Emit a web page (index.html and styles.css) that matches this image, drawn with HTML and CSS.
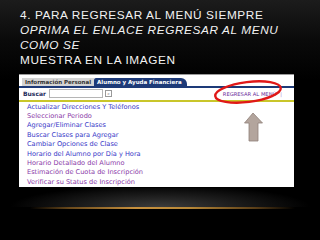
FILE: index.html
```html
<!DOCTYPE html>
<html>
<head>
<meta charset="utf-8">
<link rel="stylesheet" href="styles.css">
</head>
<body>
<div class="slide">
  <h1 class="title">
    <span class="line">4. PARA REGRESAR AL MENÚ SIEMPRE</span>
    <span class="line it">OPRIMA EL ENLACE REGRESAR AL MENU</span>
    <span class="line it">COMO SE</span>
    <span class="line">MUESTRA EN LA IMAGEN</span>
  </h1>
  <div class="shot">
    <div class="tabs">
      <span class="tab gray">Información Personal</span>
      <span class="tab blue">Alumno y Ayuda Financiera</span>
    </div>
    <div class="search">
      <span class="lbl">Buscar</span>
      <span class="inp"></span>
      <span class="go">»</span>
      <span class="back">REGRESAR AL MENÚ</span>
      <span class="cut">|</span>
    </div>
    <ul class="links">
      <li class="b">Actualizar Direcciones Y Teléfonos</li>
      <li class="p">Seleccionar Periodo</li>
      <li class="b">Agregar/Eliminar Clases</li>
      <li class="b">Buscar Clases para Agregar</li>
      <li class="b">Cambiar Opciones de Clase</li>
      <li class="b">Horario del Alumno por Día y Hora</li>
      <li class="p">Horario Detallado del Alumno</li>
      <li class="p">Estimación de Cuota de Inscripción</li>
      <li class="p">Verificar su Status de Inscripción</li>
    </ul>
    <svg class="marks" width="275" height="113" viewBox="0 0 275 113">
      <ellipse cx="229" cy="18" rx="33" ry="10" transform="rotate(-7 229 18)" fill="none" stroke="#e01818" stroke-width="2.4"/>
      <path d="M234 39 L243.5 49 L239 49 L239 67 L230 67 L230 49 L225.5 49 Z" fill="#b3a59d" stroke="#8f8079" stroke-width="0.8"/>
    </svg>
  </div>
  <div class="glow"></div>
  <div class="gold"></div>
</div>
</body>
</html>
```
FILE: styles.css
```css
html, body {
  margin: 0;
  padding: 0;
}
body {
  width: 320px;
  height: 240px;
  overflow: hidden;
  background: #000;
}
.slide {
  width: 320px;
  height: 240px;
  background: linear-gradient(#1c1c1c 0px, #0a0a0a 40px, #000 80px);
  display: flex;
  flex-direction: column;
}
.title {
  margin: 0;
  padding: 8px 0 0 20px;
  font-family: "Liberation Sans", Arial, sans-serif;
  font-weight: normal;
  font-size: 11.8px;
  line-height: 15px;
  color: #f2f2f2;
  letter-spacing: 0.6px;
  display: flex;
  flex-direction: column;
}
.line { white-space: nowrap; }
.it { font-style: italic; }
.shot {
  position: relative;
  margin: 6px 0 0 19px;
  width: 275px;
  height: 113px;
  background: #fff;
  font-family: "DejaVu Sans", Verdana, sans-serif;
  display: flex;
  flex-direction: column;
}
.tabs {
  height: 11px;
  display: flex;
  align-items: flex-end;
  padding-left: 3px;
  border-top: 1px solid #9a9a9a;
  border-bottom: 2px solid #1d3a78;
}
.tab {
  font-size: 5.5px;
  font-weight: bold;
  height: 8px;
  line-height: 8px;
  padding: 0 3px;
  white-space: nowrap;
}
.gray {
  background: #d4d4d4;
  color: #333;
}
.blue {
  background: #1d3a78;
  color: #fff;
  border-radius: 2px 6px 0 0;
  padding-right: 5px;
}
.search {
  height: 12px;
  display: flex;
  align-items: center;
  padding-left: 4px;
  border-bottom: 2px solid #c9c62a;
}
.lbl {
  font-size: 6px;
  font-weight: bold;
  color: #1d2a5a;
  width: 26px;
}
.inp {
  width: 52px;
  height: 7px;
  border: 1px solid #b5b5b5;
}
.go {
  margin-left: 2px;
  width: 5px;
  height: 5px;
  border: 1px solid #999;
  font-size: 4px;
  line-height: 5px;
  text-align: center;
  color: #666;
}
.back {
  margin-left: auto;
  font-size: 5.2px;
  color: #6a2a9a;
  white-space: nowrap;
}
.cut {
  margin-left: 4px;
  margin-right: 12px;
  font-size: 5px;
  color: #9a7ac0;
}
.links {
  list-style: none;
  margin: 1px 0 0 0;
  padding: 0 0 0 8px;
  font-size: 6.6px;
  line-height: 9.375px;
}
.links li { white-space: nowrap; }
.b { color: #3838c8; }
.p { color: #8a3aa8; }
.marks {
  position: absolute;
  left: 0;
  top: 0;
}
.glow {
  margin-top: 1px;
  height: 19px;
  background: radial-gradient(ellipse 150px 22px at 50% 100%, #3c3c3c 0%, #1a1a1a 55%, rgba(0,0,0,0) 100%);
}
.gold {
  margin-left: 30px;
  width: 265px;
  height: 2px;
  background: linear-gradient(90deg, rgba(0,0,0,0) 0%, #6b4a1c 15%, #c8913e 40%, #b88838 60%, #5a3e18 85%, rgba(0,0,0,0) 100%);
}
```
